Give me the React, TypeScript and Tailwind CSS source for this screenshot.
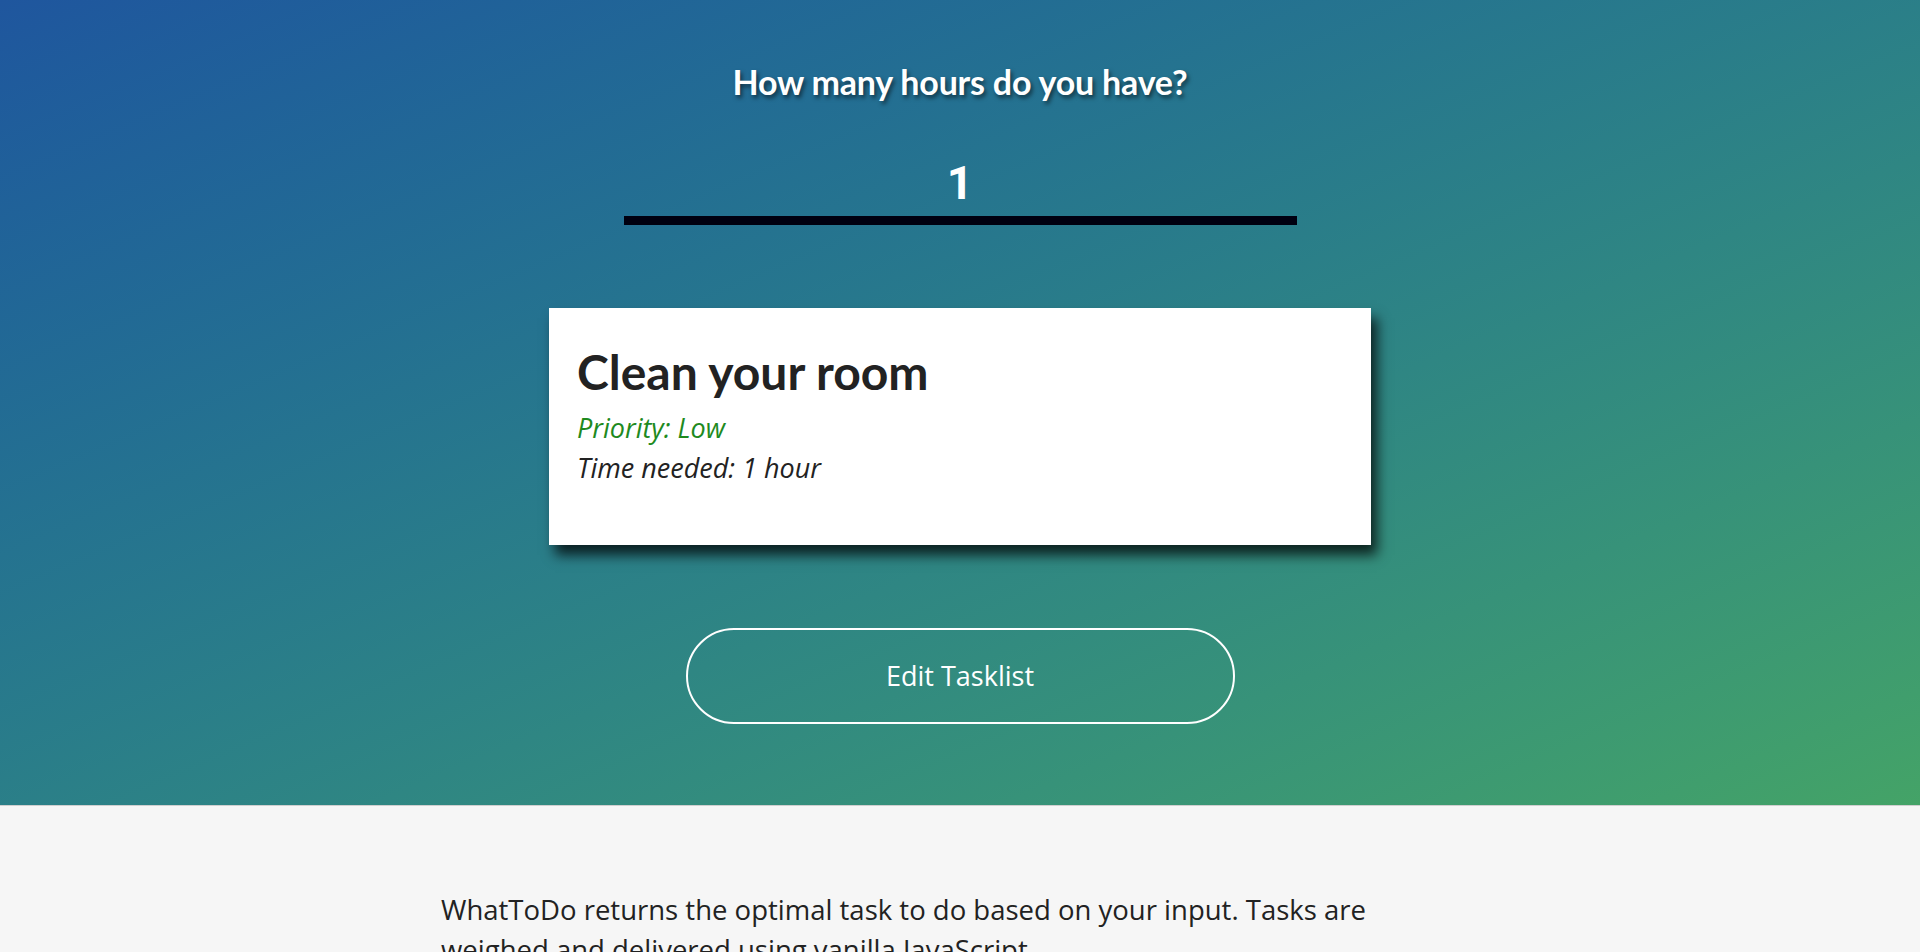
import { useState } from 'react';

export default function App() {
  const [hours, setHours] = useState('1');

  return (
    <div className="min-h-screen bg-[#f6f6f6]">
      <section className="h-[806px] bg-linear-to-br from-[#1f569e] to-[#44a367] border-b border-[#cfcfcf] flex flex-col items-center">
        <h2 className="mt-[60px] text-[34px] leading-[44px] font-bold text-white font-['Lato',sans-serif] tracking-[-0.2px] [text-shadow:2px_3px_4px_rgba(0,0,0,0.55)]">
          How many hours do you have?
        </h2>

        <div className="mt-[46px] w-[673px] border-b-[9px] border-[#000010]">
          <input
            type="text"
            value={hours}
            onChange={(e) => setHours(e.target.value)}
            className="block w-full h-[66px] bg-transparent text-center text-white text-[46px] font-bold font-['Roboto',sans-serif] outline-none"
          />
        </div>

        <div className="mt-[83px] w-[822px] h-[237px] bg-white px-[28px] pt-[36px] shadow-[6px_10px_12px_rgba(0,0,0,0.75)]">
          <h3 className="text-[48px] leading-[56px] font-bold text-[#222] font-['Lato',sans-serif]">Clean your room</h3>
          <p className="mt-[8px] text-[27px] leading-[40px] italic text-[#1e8a1e] font-['Open_Sans',sans-serif]">Priority: Low</p>
          <p className="text-[27px] leading-[40px] italic text-[#222] font-['Open_Sans',sans-serif]">Time needed: 1 hour</p>
        </div>

        <button className="mt-[83px] w-[549px] h-[96px] rounded-full border-2 border-white text-white text-[27px] font-['Open_Sans',sans-serif]">
          Edit Tasklist
        </button>
      </section>

      <div className="w-[1038px] mx-auto pt-[84px]">
        <p className="w-[940px] text-[27.5px] leading-[40px] text-[#222] font-['Open_Sans',sans-serif]">
          WhatToDo returns the optimal task to do based on your input. Tasks are weighed and delivered using vanilla JavaScript.
        </p>
      </div>
    </div>
  );
}
